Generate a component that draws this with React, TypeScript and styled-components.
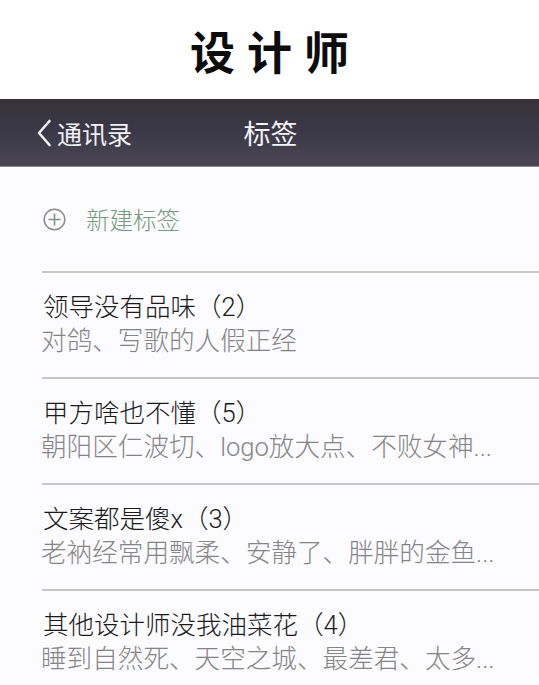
import React from "react";
import styled, { createGlobalStyle } from "styled-components";

const GlobalStyle = createGlobalStyle`
  html, body {
    margin: 0;
    padding: 0;
    background: #fcfbfd;
  }
  body {
    font-family: Roboto, "Liberation Sans", "Noto Sans CJK SC", sans-serif;
  }
`;

const Page = styled.div`
  width: 539px;
  min-height: 685px;
  background: #fcfbfd;
  overflow: hidden;
`;

const Header = styled.header`
  height: 99px;
  background: #ffffff;
  display: flex;
  align-items: center;
  justify-content: center;
`;

const HeaderTitle = styled.h1`
  margin: 0;
  padding-left: 12px;
  padding-top: 2px;
  font-family: "Noto Sans CJK SC", sans-serif;
  font-weight: 700;
  font-size: 45px;
  letter-spacing: 12px;
  line-height: 1;
  color: #0c0c0c;
`;

const NavBar = styled.nav`
  height: 68px;
  box-sizing: border-box;
  background: linear-gradient(#36333a 0%, #3a3847 45%, #4a4652 100%);
  border-bottom: 1px solid #8a878d;
  display: grid;
  grid-template-columns: 1fr auto 1fr;
  align-items: center;
`;

const BackButton = styled.div`
  display: flex;
  align-items: center;
  gap: 5px;
  padding-left: 36px;
  color: #f0eff2;
  font-family: "Noto Sans CJK SC", sans-serif;
  font-size: 25px;
`;

const NavTitle = styled.div`
  color: #f4f3f6;
  font-family: "Noto Sans CJK SC", sans-serif;
  font-size: 27px;
  padding-left: 2px;
`;

const NewTagRow = styled.div`
  height: 104px;
  display: flex;
  align-items: center;
  gap: 20px;
  padding-left: 43px;
`;

const NewTagText = styled.span`
  font-family: "Noto Sans CJK SC", sans-serif;
  font-weight: 300;
  font-size: 23.5px;
  color: #769a7c;
`;

const List = styled.ul`
  list-style: none;
  margin: 0;
  padding: 0 0 0 42px;
`;

const Row = styled.li`
  border-top: 2px solid #c7c6cb;
  padding: 18px 0 18px 1px;
  display: flex;
  flex-direction: column;
`;

const RowTitle = styled.div`
  font-size: 25.5px;
  font-weight: 300;
  line-height: 32px;
  color: #1a1a1a;
  white-space: nowrap;
`;

const RowSub = styled.div`
  font-size: 25.6px;
  font-weight: 300;
  line-height: 36px;
  color: #858587;
  white-space: nowrap;
  margin-left: -2px;
`;

const Chevron = () => (
  <svg width="16" height="28" viewBox="0 0 16 28" fill="none">
    <path d="M13.5 2 L3 14 L13.5 26" stroke="#f0eff2" strokeWidth="2.6" strokeLinecap="round" strokeLinejoin="round" />
  </svg>
);

const PlusCircle = () => (
  <svg width="23" height="23" viewBox="0 0 23 23" fill="none">
    <circle cx="11.5" cy="11.5" r="10.3" stroke="#8b8d8b" strokeWidth="1.5" />
    <path d="M11.5 5.5 V17.5 M5.5 11.5 H17.5" stroke="#7f9283" strokeWidth="1.6" />
  </svg>
);

const tags = [
  { title: "领导没有品味（2）", sub: "对鸽、写歌的人假正经" },
  { title: "甲方啥也不懂（5）", sub: "朝阳区仁波切、logo放大点、不败女神..." },
  { title: "文案都是傻x（3）", sub: "老衲经常用飘柔、安静了、胖胖的金鱼..." },
  { title: "其他设计师没我油菜花（4）", sub: "睡到自然死、天空之城、最差君、太多..." },
];

export default function App() {
  return (
    <Page>
      <GlobalStyle />
      <Header>
        <HeaderTitle>设计师</HeaderTitle>
      </Header>
      <NavBar>
        <BackButton>
          <Chevron />
          <span>通讯录</span>
        </BackButton>
        <NavTitle>标签</NavTitle>
        <div />
      </NavBar>
      <NewTagRow>
        <PlusCircle />
        <NewTagText>新建标签</NewTagText>
      </NewTagRow>
      <List>
        {tags.map((t) => (
          <Row key={t.title}>
            <RowTitle>{t.title}</RowTitle>
            <RowSub>{t.sub}</RowSub>
          </Row>
        ))}
      </List>
    </Page>
  );
}
